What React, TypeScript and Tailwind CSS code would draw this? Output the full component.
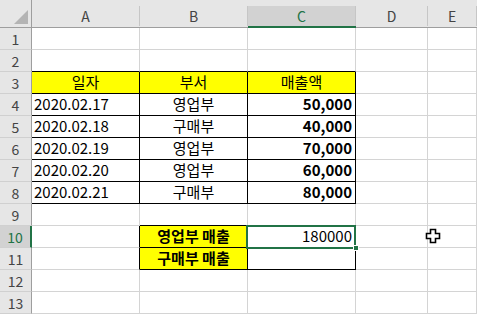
import React from 'react'

// Excel-like sheet: column widths / row heights measured from the capture.
const COLS = ['A', 'B', 'C', 'D', 'E']
const ROWS = Array.from({ length: 13 }, (_, i) => i + 1)

type Cell = {
  text?: string
  align?: 'left' | 'center' | 'right'
  bold?: boolean
  fill?: boolean
  bR?: boolean // black right border
  bB?: boolean // black bottom border
}

const DATA: Array<[string, string, string]> = [
  ['2020.02.17', '영업부', '50,000'],
  ['2020.02.18', '구매부', '40,000'],
  ['2020.02.19', '영업부', '70,000'],
  ['2020.02.20', '영업부', '60,000'],
  ['2020.02.21', '구매부', '80,000'],
]

function cellAt(row: number, col: number): Cell {
  // col: 0=A .. 4=E
  if (row === 2 && col <= 2) return { bB: true }
  if (row === 3 && col <= 2) {
    return { text: ['일자', '부서', '매출액'][col], align: 'center', fill: true, bR: true, bB: true }
  }
  if (row >= 4 && row <= 8 && col <= 2) {
    const r = DATA[row - 4]
    if (col === 0) return { text: r[0], align: 'left', bR: true, bB: true }
    if (col === 1) return { text: r[1], align: 'center', bR: true, bB: true }
    return { text: r[2], align: 'right', bold: true, bR: true, bB: true }
  }
  if (row === 9 && (col === 1 || col === 2)) return { bB: true }
  if ((row === 10 || row === 11) && col === 0) return { bR: true }
  if (row === 10 && col === 1) return { text: '영업부 매출', align: 'center', bold: true, fill: true, bR: true, bB: true }
  if (row === 11 && col === 1) return { text: '구매부 매출', align: 'center', bold: true, fill: true, bR: true, bB: true }
  if (row === 10 && col === 2) return { text: '180000', align: 'right', bR: true, bB: true }
  if (row === 11 && col === 2) return { bR: true, bB: true }
  return {}
}

function SheetCell({ row, col }: { row: number; col: number }) {
  const c = cellAt(row, col)
  const selected = row === 10 && col === 2
  return (
    <div
      className={[
        'relative flex items-end overflow-visible whitespace-nowrap border-r border-b pb-[1px] text-[15px] leading-[20px] text-black',
        c.bR ? 'border-r-black' : 'border-r-[#d4d4d4]',
        c.bB ? 'border-b-black' : 'border-b-[#d4d4d4]',
        c.fill ? 'bg-[#ffff00]' : 'bg-white',
        c.align === 'center' ? 'justify-center' : c.align === 'right' ? 'justify-end pr-[3px]' : 'justify-start pl-[2px]',
        c.bold ? 'font-bold' : 'font-normal',
        selected ? 'z-10' : '',
      ].join(' ')}
    >
      {c.text && <span>{c.text}</span>}
      {selected && (
        <>
          <div className="pointer-events-none absolute -left-[2px] -top-[1px] h-[24px] w-[110px] border-2 border-[#217346]" />
          <div className="absolute -bottom-[4px] -right-[4px] h-[6px] w-[6px] border border-white bg-[#217346]" />
        </>
      )}
    </div>
  )
}

function Cursor() {
  return (
    <svg className="absolute left-[425px] top-[228px]" width="16" height="16" viewBox="0 0 16 16">
      <path
        d="M5.5 1.5h5v4h4v5h-4v4h-5v-4h-4v-5h4z"
        fill="#fff"
        stroke="#000"
        strokeWidth="1.6"
        strokeLinejoin="miter"
      />
    </svg>
  )
}

export default function App() {
  return (
    <div
      className="relative h-[314px] w-[477px] overflow-hidden bg-white"
      style={{ fontFamily: '"Noto Sans CJK KR", "Noto Sans", sans-serif' }}
    >
      <div className="grid grid-cols-[32px_108px_108px_108px_72px_1fr] grid-rows-[28px_repeat(13,22px)]">
        {/* corner */}
        <div className="relative border-r border-b border-r-[#9e9e9e] border-b-[#9e9e9e] bg-[#e6e6e6]">
          <svg className="absolute left-[14px] top-[10px]" width="14" height="14" viewBox="0 0 14 14">
            <path d="M14 0V14H0Z" fill="#b4b4b4" />
          </svg>
        </div>
        {COLS.map((col) => {
          const active = col === 'C'
          return (
            <div key={col} className="flex flex-col bg-[#e6e6e6]">
              <div className="h-[6px]" />
              <div
                className={[
                  'flex flex-1 items-center justify-center border-r border-r-[#c6c6c6] text-[14px] leading-none',
                  active ? 'bg-[#d2d2d2] text-[#217346]' : 'text-[#444]',
                ].join(' ')}
              >
                {col}
              </div>
              <div className={active ? 'h-[2px] bg-[#217346]' : 'h-[2px] border-b border-b-[#9e9e9e]'} />
            </div>
          )
        })}
        {ROWS.map((row) => (
          <React.Fragment key={row}>
            <div
              className={[
                'flex items-center justify-center border-b border-b-[#d0d0d0] text-[14px] leading-none',
                row === 10
                  ? 'border-r-2 border-r-[#217346] bg-[#d2d2d2] text-[#217346]'
                  : 'border-r border-r-[#9e9e9e] bg-[#e6e6e6] text-[#444]',
              ].join(' ')}
            >
              {row}
            </div>
            {COLS.map((_, ci) => (
              <SheetCell key={ci} row={row} col={ci} />
            ))}
          </React.Fragment>
        ))}
      </div>
      <Cursor />
    </div>
  )
}
